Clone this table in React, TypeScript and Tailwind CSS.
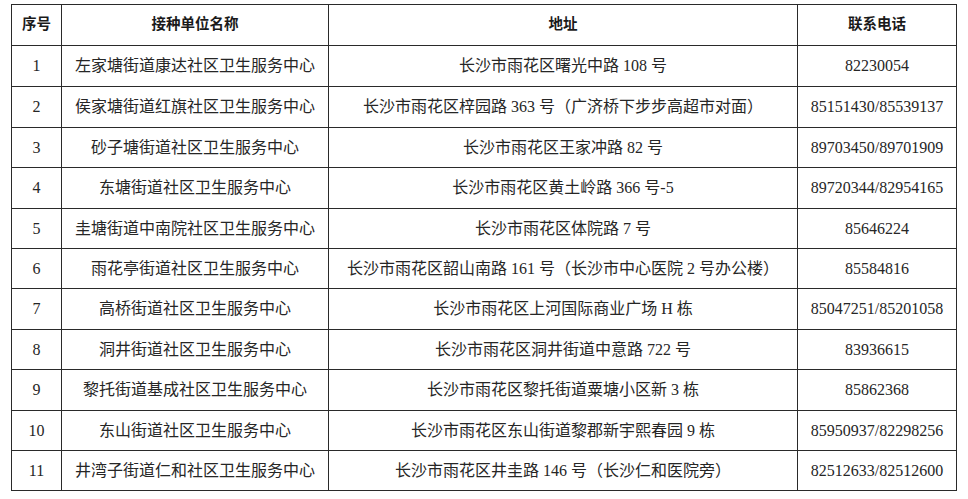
const rows = [
  { no: "1", name: "左家塘街道康达社区卫生服务中心", addr: "长沙市雨花区曙光中路 108 号", tel: "82230054", h: "h-[41px]" },
  { no: "2", name: "侯家塘街道红旗社区卫生服务中心", addr: "长沙市雨花区梓园路 363 号（广济桥下步步高超市对面）", tel: "85151430/85539137", h: "h-[41px]" },
  { no: "3", name: "砂子塘街道社区卫生服务中心", addr: "长沙市雨花区王家冲路 82 号", tel: "89703450/89701909", h: "h-[40px]" },
  { no: "4", name: "东塘街道社区卫生服务中心", addr: "长沙市雨花区黄土岭路 366 号-5", tel: "89720344/82954165", h: "h-[41px]" },
  { no: "5", name: "圭塘街道中南院社区卫生服务中心", addr: "长沙市雨花区体院路 7 号", tel: "85646224", h: "h-[40px]" },
  { no: "6", name: "雨花亭街道社区卫生服务中心", addr: "长沙市雨花区韶山南路 161 号（长沙市中心医院 2 号办公楼）", tel: "85584816", h: "h-[40px]" },
  { no: "7", name: "高桥街道社区卫生服务中心", addr: "长沙市雨花区上河国际商业广场 H 栋", tel: "85047251/85201058", h: "h-[41px]" },
  { no: "8", name: "洞井街道社区卫生服务中心", addr: "长沙市雨花区洞井街道中意路 722 号", tel: "83936615", h: "h-[40px]" },
  { no: "9", name: "黎托街道基成社区卫生服务中心", addr: "长沙市雨花区黎托街道粟塘小区新 3 栋", tel: "85862368", h: "h-[41px]" },
  { no: "10", name: "东山街道社区卫生服务中心", addr: "长沙市雨花区东山街道黎郡新宇熙春园 9 栋", tel: "85950937/82298256", h: "h-[40px]" },
  { no: "11", name: "井湾子街道仁和社区卫生服务中心", addr: "长沙市雨花区井圭路 146 号（长沙仁和医院旁）", tel: "82512633/82512600", h: "h-[40px]" },
];

const font = "font-['Liberation_Serif','Noto_Sans_CJK_SC',serif]";

export default function App() {
  return (
    <div className="w-[968px] h-[499px] bg-white pl-[11px] pt-[4px]">
      <table className={`table-fixed border-collapse w-[945px] text-[#262626] text-[16px] ${font}`}>
        <colgroup>
          <col className="w-[50px]" />
          <col className="w-[267px]" />
          <col className="w-[469px]" />
          <col className="w-[159px]" />
        </colgroup>
        {/* header */}
        <thead>
          <tr className="h-[41px] text-[14.5px] font-bold text-[#1a1a1a]">
            <th className="border border-[#2a2a2a] p-0 text-center">序号</th>
            <th className="border border-[#2a2a2a] p-0 text-center">接种单位名称</th>
            <th className="border border-[#2a2a2a] p-0 text-center">地址</th>
            <th className="border border-[#2a2a2a] p-0 text-center">联系电话</th>
          </tr>
        </thead>
        <tbody>
          {rows.map((r) => (
            <tr key={r.no} className={r.h}>
              <td className="border border-[#2a2a2a] p-0 text-center">{r.no}</td>
              <td className="border border-[#2a2a2a] p-0 text-center">{r.name}</td>
              <td className="border border-[#2a2a2a] p-0 text-center">{r.addr}</td>
              <td className="border border-[#2a2a2a] p-0 text-center">{r.tel}</td>
            </tr>
          ))}
        </tbody>
      </table>
    </div>
  );
}
